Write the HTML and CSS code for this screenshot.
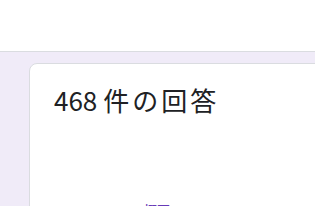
FILE: index.html
```html
<!DOCTYPE html>
<html lang="ja">
<head>
<meta charset="utf-8">
<link rel="stylesheet" href="styles.css">
</head>
<body>
<div class="topbar"></div>
<main class="main">
  <section class="card">
    <h1 class="title"><span class="num">468</span> <span class="jp">件の回答</span></h1>
    <nav class="tabs">
      <span class="tab active">概要</span>
    </nav>
  </section>
</main>
</body>
</html>
```
FILE: styles.css
```css
html, body {
  margin: 0;
  padding: 0;
  background: #f0ebf8;
  overflow: hidden;
}
.topbar {
  height: 51px;
  background: #ffffff;
  border-bottom: 1px solid #dadce0;
}
.main {
  padding: 11px 0 0 29px;
}
.card {
  width: 760px;
  height: 400px;
  box-sizing: border-box;
  background: #ffffff;
  border: 1px solid #dadce0;
  border-radius: 8px;
  padding: 20px 24px 0 24px;
}
.title {
  margin: 0;
  font-family: "Noto Sans CJK JP", sans-serif;
  font-weight: 400;
  font-size: 26px;
  line-height: 32px;
  color: #202124;
  height: 32px;
}
.jp {
  letter-spacing: 3px;
}
.tabs {
  display: flex;
  padding-left: 90px;
  margin-top: 84px;
}
.tab {
  font-family: "Noto Sans CJK JP", sans-serif;
  font-size: 13px;
  line-height: 20px;
  color: #673ab7;
  font-weight: 500;
}
```
